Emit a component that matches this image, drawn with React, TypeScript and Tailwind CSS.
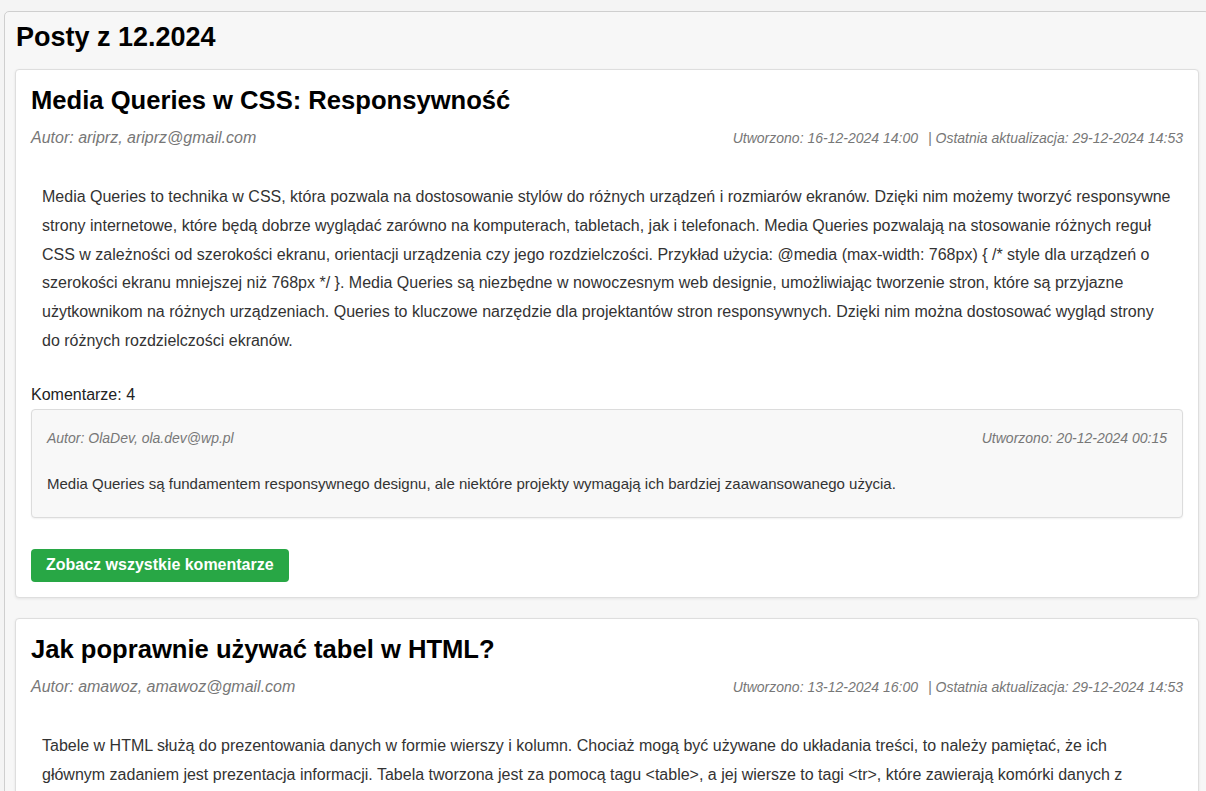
import React from 'react';

type Comment = {
  author: string;
  email: string;
  created: string;
  text: string;
};

type Post = {
  title: string;
  author: string;
  email: string;
  created: string;
  updated: string;
  content: string;
  commentCount: number;
  comments: Comment[];
};

const POSTS: Post[] = [
  {
    title: 'Media Queries w CSS: Responsywność',
    author: 'ariprz',
    email: 'ariprz@gmail.com',
    created: '16-12-2024 14:00',
    updated: '29-12-2024 14:53',
    content:
      'Media Queries to technika w CSS, która pozwala na dostosowanie stylów do różnych urządzeń i rozmiarów ekranów. Dzięki nim możemy tworzyć responsywne strony internetowe, które będą dobrze wyglądać zarówno na komputerach, tabletach, jak i telefonach. Media Queries pozwalają na stosowanie różnych reguł CSS w zależności od szerokości ekranu, orientacji urządzenia czy jego rozdzielczości. Przykład użycia: @media (max-width: 768px) { /* style dla urządzeń o szerokości ekranu mniejszej niż 768px */ }. Media Queries są niezbędne w nowoczesnym web designie, umożliwiając tworzenie stron, które są przyjazne użytkownikom na różnych urządzeniach. Queries to kluczowe narzędzie dla projektantów stron responsywnych. Dzięki nim można dostosować wygląd strony do różnych rozdzielczości ekranów.',
    commentCount: 4,
    comments: [
      {
        author: 'OlaDev',
        email: 'ola.dev@wp.pl',
        created: '20-12-2024 00:15',
        text: 'Media Queries są fundamentem responsywnego designu, ale niektóre projekty wymagają ich bardziej zaawansowanego użycia.',
      },
    ],
  },
  {
    title: 'Jak poprawnie używać tabel w HTML?',
    author: 'amawoz',
    email: 'amawoz@gmail.com',
    created: '13-12-2024 16:00',
    updated: '29-12-2024 14:53',
    content:
      'Tabele w HTML służą do prezentowania danych w formie wierszy i kolumn. Chociaż mogą być używane do układania treści, to należy pamiętać, że ich głównym zadaniem jest prezentacja informacji. Tabela tworzona jest za pomocą tagu <table>, a jej wiersze to tagi <tr>, które zawierają komórki danych z tagiem <td>. Nagłówki kolumn definiuje się za pomocą tagu <th>, co poprawia czytelność i dostępność tabeli dla czytników ekranu.',
    commentCount: 2,
    comments: [],
  },
];

function CommentBox({ comment }: { comment: Comment }) {
  return (
    <div className="rounded-[4px] border border-[#dcdcdc] bg-[#f8f8f8] px-[15px] pt-[17px] pb-[21px] shadow-[0_1px_2px_rgba(0,0,0,0.06)]">
      <div className="flex h-[24px] items-center justify-between text-[14px] italic text-[#777]">
        <span>
          Autor: {comment.author}, {comment.email}
        </span>
        <span>Utworzono: {comment.created}</span>
      </div>
      <p className="mt-[21px] text-[15px] leading-[24px] text-[#333]">{comment.text}</p>
    </div>
  );
}

function PostCard({ post }: { post: Post }) {
  return (
    <article className="rounded-[4px] border border-[#dedede] bg-white px-[15px] pt-[15px] pb-[15px] shadow-[0_1px_3px_rgba(0,0,0,0.08)]">
      <h2 className="text-[25.6px] font-bold leading-[30px] text-black">{post.title}</h2>
      <div className="mt-[13px] flex items-baseline justify-between">
        <span className="text-[16px] italic leading-[18px] text-[#777]">
          Autor: {post.author}, {post.email}
        </span>
        <span className="text-[14px] italic text-[#777]">
          Utworzono: {post.created}
          <span className="ml-[10px]">| Ostatnia aktualizacja: {post.updated}</span>
        </span>
      </div>
      <div className="mt-[24px] px-[11px] py-[10px]">
        <p className="text-[16px] leading-[28.8px] text-[#333]">{post.content}</p>
      </div>
      <div className="mt-[20px] text-[16px] leading-[18px] text-[#222]">Komentarze: {post.commentCount}</div>
      <div className="mt-[5px] flex flex-col gap-[10px]">
        {post.comments.map((c, i) => (
          <CommentBox key={i} comment={c} />
        ))}
      </div>
      <button className="mt-[31px] h-[33px] rounded-[4px] bg-[#28a745] px-[15px] text-[16px] font-bold text-white">
        Zobacz wszystkie komentarze
      </button>
    </article>
  );
}

export default function App() {
  return (
    <div
      className="h-[791px] overflow-hidden bg-[#f4f4f4] pt-[11px] pl-[4px]"
      style={{ fontFamily: '"Liberation Sans", Arial, sans-serif' }}
    >
      <main className="w-[1206px] rounded-[5px] border border-[#cfcfcf] bg-[#f7f7f7] px-[10px] pt-[7px] pb-[20px]">
        <h1 className="ml-[1px] text-[27px] font-bold leading-[36px] text-black">Posty z 12.2024</h1>
        <div className="mt-[14px] flex flex-col gap-[20px]">
          {POSTS.map((p, i) => (
            <PostCard key={i} post={p} />
          ))}
        </div>
      </main>
    </div>
  );
}
